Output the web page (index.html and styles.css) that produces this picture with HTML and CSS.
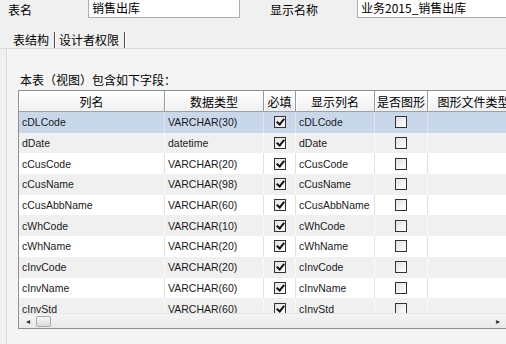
FILE: index.html
```html
<!DOCTYPE html>
<html lang="zh-CN">
<head>
  <meta charset="UTF-8" />
  <title>销售出库 - 表结构</title>
  <link rel="stylesheet" href="styles.css">
</head>
<body>
  <div class="top">
    <span class="cap cap-name">表名</span>
    <div class="field field-name">销售出库</div>
    <span class="cap cap-show">显示名称</span>
    <div class="field field-show">业务2015_销售出库</div>
  </div>

  <div class="tabs">
    <span class="tab">表结构</span>
    <span class="tab">设计者权限</span>
  </div>

  <div class="page">
    <div class="hint">本表（视图）包含如下字段：</div>
    <div class="grid">
      <div class="row head">
        <div class="cell c1">列名</div>
        <div class="cell c2">数据类型</div>
        <div class="cell c3">必填</div>
        <div class="cell c4">显示列名</div>
        <div class="cell c5">是否图形</div>
        <div class="cell c6">图形文件类型</div>
      </div>
      <div class="body">
        <div class="row sel">
          <div class="cell c1">cDLCode</div><div class="cell c2">VARCHAR(30)</div>
          <div class="cell c3"><span class="chk on"></span></div><div class="cell c4">cDLCode</div>
          <div class="cell c5"><span class="chk"></span></div><div class="cell c6"></div>
        </div>
        <div class="row alt">
          <div class="cell c1">dDate</div><div class="cell c2">datetime</div>
          <div class="cell c3"><span class="chk on"></span></div><div class="cell c4">dDate</div>
          <div class="cell c5"><span class="chk"></span></div><div class="cell c6"></div>
        </div>
        <div class="row">
          <div class="cell c1">cCusCode</div><div class="cell c2">VARCHAR(20)</div>
          <div class="cell c3"><span class="chk on"></span></div><div class="cell c4">cCusCode</div>
          <div class="cell c5"><span class="chk"></span></div><div class="cell c6"></div>
        </div>
        <div class="row alt">
          <div class="cell c1">cCusName</div><div class="cell c2">VARCHAR(98)</div>
          <div class="cell c3"><span class="chk on"></span></div><div class="cell c4">cCusName</div>
          <div class="cell c5"><span class="chk"></span></div><div class="cell c6"></div>
        </div>
        <div class="row">
          <div class="cell c1">cCusAbbName</div><div class="cell c2">VARCHAR(60)</div>
          <div class="cell c3"><span class="chk on"></span></div><div class="cell c4">cCusAbbName</div>
          <div class="cell c5"><span class="chk"></span></div><div class="cell c6"></div>
        </div>
        <div class="row alt">
          <div class="cell c1">cWhCode</div><div class="cell c2">VARCHAR(10)</div>
          <div class="cell c3"><span class="chk on"></span></div><div class="cell c4">cWhCode</div>
          <div class="cell c5"><span class="chk"></span></div><div class="cell c6"></div>
        </div>
        <div class="row">
          <div class="cell c1">cWhName</div><div class="cell c2">VARCHAR(20)</div>
          <div class="cell c3"><span class="chk on"></span></div><div class="cell c4">cWhName</div>
          <div class="cell c5"><span class="chk"></span></div><div class="cell c6"></div>
        </div>
        <div class="row alt">
          <div class="cell c1">cInvCode</div><div class="cell c2">VARCHAR(20)</div>
          <div class="cell c3"><span class="chk on"></span></div><div class="cell c4">cInvCode</div>
          <div class="cell c5"><span class="chk"></span></div><div class="cell c6"></div>
        </div>
        <div class="row">
          <div class="cell c1">cInvName</div><div class="cell c2">VARCHAR(60)</div>
          <div class="cell c3"><span class="chk on"></span></div><div class="cell c4">cInvName</div>
          <div class="cell c5"><span class="chk"></span></div><div class="cell c6"></div>
        </div>
        <div class="row alt">
          <div class="cell c1">cInvStd</div><div class="cell c2">VARCHAR(60)</div>
          <div class="cell c3"><span class="chk on"></span></div><div class="cell c4">cInvStd</div>
          <div class="cell c5"><span class="chk"></span></div><div class="cell c6"></div>
        </div>
      </div>
      <div class="hscroll">
        <span class="arrow">&#9666;</span>
        <span class="thumb"></span>
        <span class="spacer"></span>
        <span class="arrow">&#9656;</span>
      </div>
    </div>
  </div>
</body>
</html>
```

FILE: styles.css
```css
* { margin: 0; padding: 0; box-sizing: border-box; }
body {
  font-family: "Noto Sans CJK SC", "Liberation Sans", sans-serif;
  font-size: 12px;
  color: #000;
  background: #f0f0f0;
  width: 506px;
  height: 344px;
  overflow: hidden;
}

/* top fields */
.top {
  display: flex;
  align-items: center;
  height: 19px;
}
.cap { line-height: 16px; }
.cap-name { width: 88px; padding-left: 8px; }
.cap-show { width: 87px; margin-left: 30px; }
.field {
  align-self: flex-start;
  height: 18px;
  background: #fff;
  border: 1px solid #abadb3;
  border-top: none;
  padding: 0 3px;
  line-height: 16px;
}
.field-name { width: 152px; }
.field-show { flex: 1; border-right: none; }

/* tabs */
.tabs {
  display: flex;
  height: 30px;
  padding: 13px 0 0 13px;
  border-bottom: 1px solid #dadada;
}
.tab {
  line-height: 16px;
  height: 16px;
  padding-right: 5px;
  margin-right: 4px;
  border-right: 1px solid #4a4a4a;
  box-shadow: 1px 0 0 #fff;
}

/* tab page */
.page {
  margin-left: 6px;
  height: 295px;
  border-left: 1px solid #dcdcdc;
  padding: 23px 0 0 11px;
  background: #f4f4f4;
}
.hint {
  line-height: 16px;
  padding-left: 2px;
}
.grid {
  margin-top: 2px;
  border: 1px solid #8d9095;
  border-right: none;
  background: #fff;
  overflow: hidden;
}
.row {
  display: flex;
  height: 20.7px;
  font-family: "Liberation Sans", "Noto Sans CJK SC", sans-serif;
  font-size: 10.5px;
  color: #1a1a1a;
}
.cell {
  flex: none;
  display: flex;
  align-items: center;
  padding: 0 3px;
  border-right: 1px solid #e2e2e2;
  white-space: nowrap;
  overflow: hidden;
}
.c1 { width: 146px; }
.c2 { width: 99px; }
.c3 { width: 32px; justify-content: center; }
.c4 { width: 79px; }
.c5 { width: 53px; justify-content: center; }
.c6 { width: 92px; }

.head {
  height: 21px;
  font-family: "Noto Sans CJK SC", sans-serif;
  font-size: 12px;
  color: #000;
  background: linear-gradient(#ffffff, #eff0f2);
  border-bottom: 1px solid #a0a0a0;
}
.head .cell {
  justify-content: center;
  border-right: 1px solid #9a9a9a;
  box-shadow: inset 1px 0 0 #fff;
}

.body {
  height: 201px;
  overflow: hidden;
}
.row.alt { background: #f0f0f0; }
.row.alt .cell { border-right-color: #fafafa; }
.row.sel { background: #c9d7ea; }
.row.sel .cell { border-right-color: #dde6f2; }

.chk {
  width: 12px;
  height: 12px;
  border: 1px solid #333;
  background: linear-gradient(135deg, #e2e2e2, #ffffff);
  position: relative;
}
.chk.on::after {
  content: "";
  position: absolute;
  left: 3px;
  top: 0px;
  width: 3px;
  height: 6px;
  border: solid #111;
  border-width: 0 2px 2px 0;
  transform: rotate(40deg);
}

/* horizontal scrollbar */
.hscroll {
  display: flex;
  align-items: center;
  height: 15px;
  background: linear-gradient(#f4f4f4, #e9e9e9);
  border-top: 1px solid #e6e6e6;
  padding: 0 6px 0 7px;
}
.arrow {
  font-size: 8px;
  line-height: 8px;
  color: #333;
}
.thumb {
  width: 15px;
  height: 11px;
  margin-left: 6px;
  border: 1px solid #a9a9a9;
  border-radius: 2px;
  background: linear-gradient(#f7f7f7, #dadada);
}
.spacer { flex: 1; }
```
